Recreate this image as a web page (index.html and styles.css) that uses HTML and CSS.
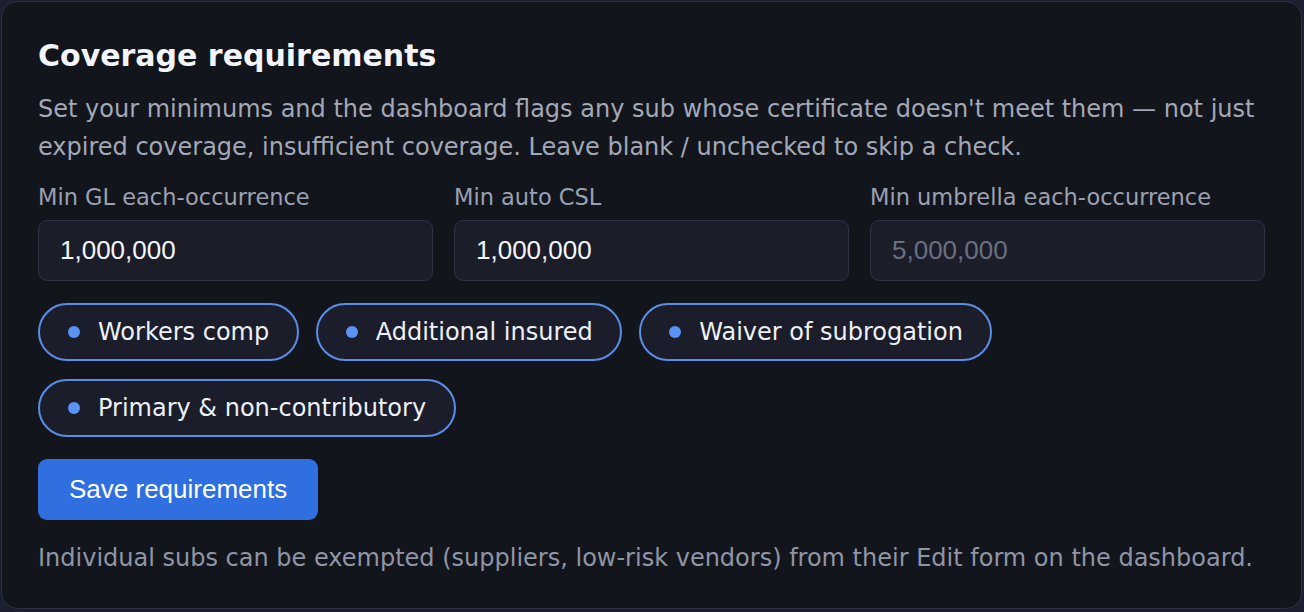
FILE: index.html
```html
<!DOCTYPE html>
<html lang="en">
<head>
<meta charset="utf-8">
<title>Coverage requirements</title>
<link rel="stylesheet" href="styles.css">
</head>
<body>
<section class="card">
  <h2 class="title">Coverage requirements</h2>
  <p class="desc">Set your minimums and the dashboard flags any sub whose certificate doesn't meet them — not just expired coverage, insufficient coverage. Leave blank / unchecked to skip a check.</p>
  <div class="fields">
    <label class="field">
      <span class="label">Min GL each-occurrence</span>
      <input class="input" type="text" value="1,000,000">
    </label>
    <label class="field">
      <span class="label">Min auto CSL</span>
      <input class="input" type="text" value="1,000,000">
    </label>
    <label class="field">
      <span class="label">Min umbrella each-occurrence</span>
      <input class="input" type="text" placeholder="5,000,000">
    </label>
  </div>
  <div class="chips">
    <button class="chip" type="button"><span class="dot"></span>Workers comp</button>
    <button class="chip" type="button"><span class="dot"></span>Additional insured</button>
    <button class="chip" type="button"><span class="dot"></span>Waiver of subrogation</button>
    <button class="chip" type="button"><span class="dot"></span>Primary &amp; non-contributory</button>
  </div>
  <button class="save" type="button">Save requirements</button>
  <p class="note">Individual subs can be exempted (suppliers, low-risk vendors) from their Edit form on the dashboard.</p>
</section>
</body>
</html>
```

FILE: styles.css
```css
html {
  background: #1c1f2d;
}
body {
  margin: 0;
  padding: 1px 2px 2px 1px;
  font-family: "DejaVu Sans", sans-serif;
}
.card {
  background: #12151c;
  border: 1px solid #2b3044;
  border-radius: 16px;
  padding: 36px 36px 32px 36px;
  display: flex;
  flex-direction: column;
  align-items: flex-start;
}
.title {
  margin: 0;
  font-size: 30px;
  line-height: 36px;
  font-weight: bold;
  color: #f2f4f8;
}
.desc {
  margin: 15.5px 0 0 0;
  font-size: 24px;
  line-height: 38.4px;
  color: #a3a8b7;
}
.fields {
  align-self: stretch;
  display: grid;
  grid-template-columns: repeat(3, 1fr);
  gap: 21px;
  margin-top: 17.5px;
}
.field {
  display: flex;
  flex-direction: column;
  gap: 10px;
}
.label {
  font-size: 22.5px;
  line-height: 26px;
  color: #9ca1b1;
}
.input {
  box-sizing: border-box;
  height: 61px;
  width: 100%;
  margin: 0;
  padding: 0 21px;
  border: 1px solid #2e3345;
  border-radius: 9px;
  background: #1b1e29;
  color: #f3f5f9;
  font-family: "Liberation Sans", Arial, sans-serif;
  font-size: 26px;
  outline: none;
}
.input::placeholder {
  color: #6b7081;
}
.chips {
  display: flex;
  flex-wrap: wrap;
  gap: 18px 17px;
  margin-top: 22px;
}
.chip {
  box-sizing: border-box;
  height: 58px;
  display: flex;
  align-items: center;
  gap: 18px;
  padding: 0 27.5px 0 28px;
  border: 2px solid #5a8de6;
  border-radius: 29px;
  background: #1b1e2a;
  color: #eef0f5;
  font-family: "DejaVu Sans", sans-serif;
  font-size: 24px;
  cursor: pointer;
}
.dot {
  width: 12px;
  height: 12px;
  border-radius: 50%;
  background: #5b93f5;
  flex: none;
}
.save {
  box-sizing: border-box;
  height: 61px;
  margin-top: 22px;
  padding: 0 31px;
  border: none;
  border-radius: 9px;
  background: #2f6fdf;
  color: #ffffff;
  font-family: "Liberation Sans", Arial, sans-serif;
  font-size: 26px;
  cursor: pointer;
}
.note {
  margin: 22px 0 0 0;
  font-size: 24px;
  line-height: 33.75px;
  color: #9095a6;
}
```
